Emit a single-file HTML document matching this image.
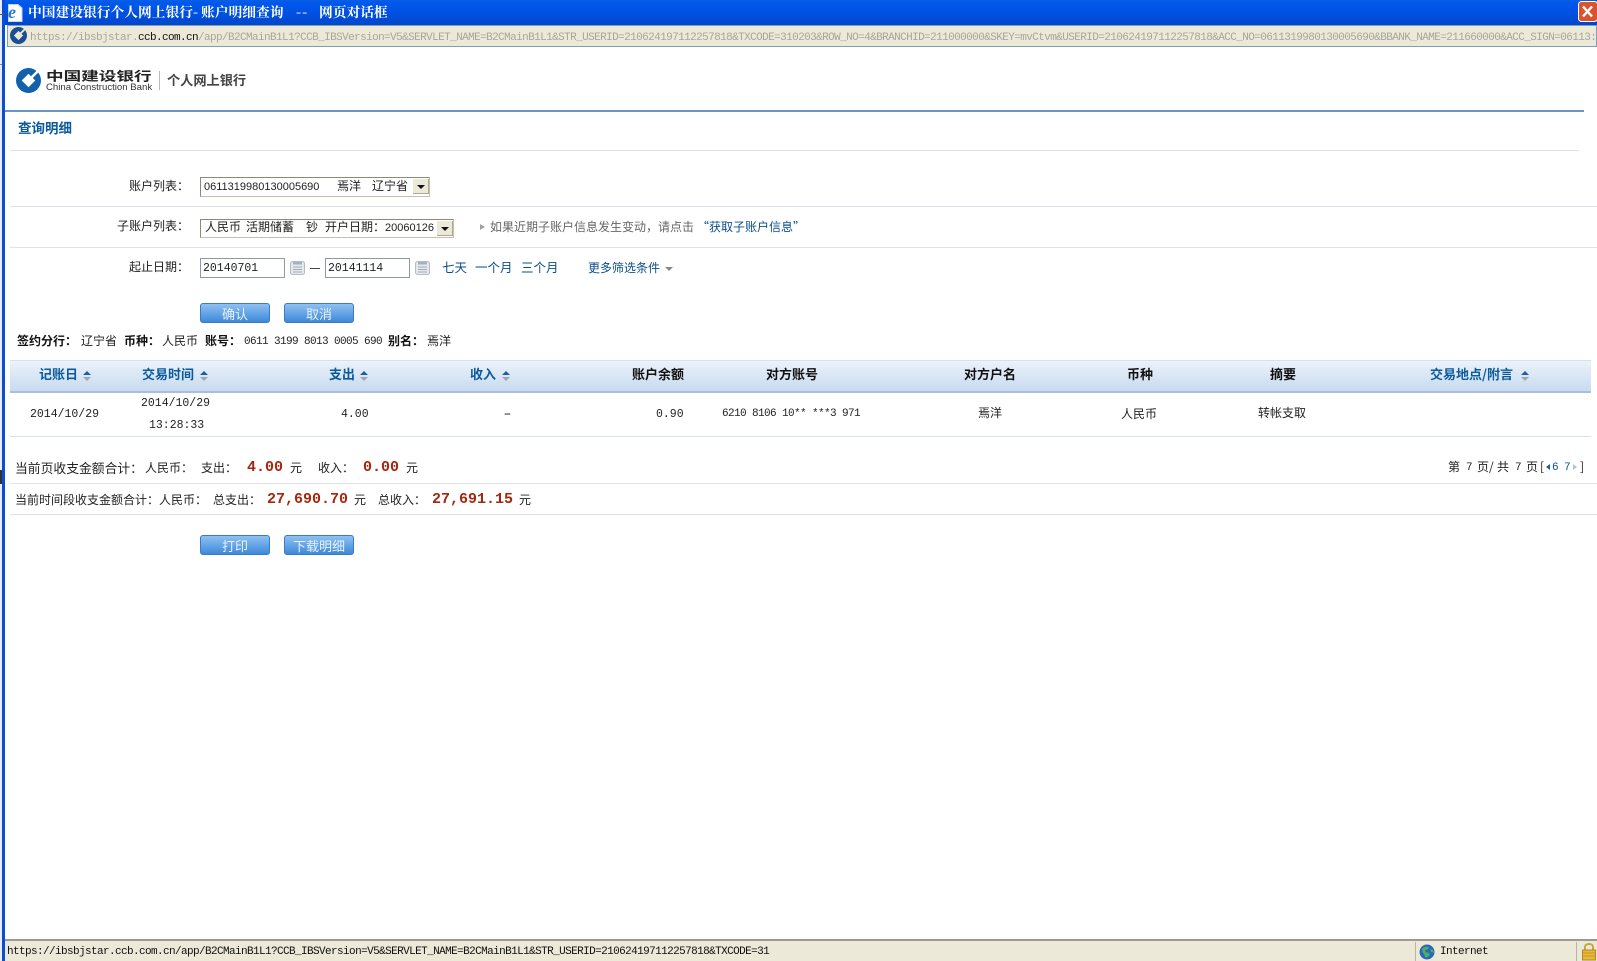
<!DOCTYPE html>
<html><head><meta charset="utf-8"><style>
html,body{margin:0;padding:0;background:#fff}
#p{position:relative;width:1597px;height:961px;overflow:hidden;background:#fff;font-family:"WenQuanYi Zen Hei","Noto Sans CJK SC",sans-serif;font-size:12px;color:#222}
.t{position:absolute;white-space:nowrap;line-height:16px;height:16px}
.b{position:absolute}
.m{font-family:"Liberation Mono",monospace;font-size:11.5px}
.s{font-family:"Liberation Mono",monospace;font-size:11px;letter-spacing:-.6px}
.h{font-weight:bold;font-size:13px;color:#111}
.l{color:#0a5a9c;font-weight:bold;font-size:13px}
.a{color:#0b4f8a}
.r{font-family:"Liberation Mono",monospace;font-weight:bold;font-size:15px;color:#a3270f}
.line{position:absolute;height:1px;background:#dde3e8}
.btn{position:absolute;width:70px;height:20px;box-sizing:border-box;border:1px solid #3a7cc4;border-radius:3px;background:linear-gradient(#8fc0f0,#6aa8e8 45%,#3f88da);color:#e8f2fc;text-align:center;line-height:19px;font-size:13px}
.sel{position:absolute;box-sizing:border-box;border:1px solid #c4c0ac;border-top:1px solid #8a8a78;border-left:1px solid #8a8a78;background:#fff}
.ar{position:absolute;width:16px;height:15px;background:#ece9d8;box-shadow:inset -1px -1px 0 #aca899}
.ar:after{content:"";position:absolute;left:4px;top:6px;border:4px solid transparent;border-top:4px solid #111;border-bottom:0}
.inp{position:absolute;box-sizing:border-box;border:1px solid #8c9aa6;background:#fff;height:20px;width:85px;padding-left:2px;line-height:20px;font-family:"Liberation Mono",monospace;font-size:11.5px;color:#222}
.tt{position:absolute;top:1px;height:20px;line-height:20px;white-space:nowrap;color:#fff;font-weight:bold;font-size:13.75px;font-family:'Noto Serif CJK SC',serif}
</style></head><body><div id="p">

<!-- window frame -->
<div class="b" style="left:5px;top:0;width:1592px;height:25px;background:linear-gradient(#0a5fe0,#0058ee 10%,#0050e0 60%,#0046c8)"></div>
<div class="b" style="left:2px;top:0;width:3px;height:961px;background:#0a4ed6"></div>
<div class="b" style="left:0;top:0;width:2px;height:961px;background:#e8edf5"></div>
<div class="b" style="left:0;top:14px;width:5px;height:1px;background:#555"></div>
<div class="b" style="left:0;top:64px;width:2px;height:1px;background:#888"></div>
<div class="b" style="left:0;top:470px;width:2px;height:14px;background:#333"></div>

<!-- title icon -->
<svg class="b" style="left:7px;top:3px" width="16" height="20" viewBox="0 0 16 20"><path d="M1.500 1.500H11L15 5V18.500H1.500Z" fill="#fff" stroke="#c8d4e8"/><text x="1" y="15" font-family="Liberation Serif" font-style="italic" font-weight="bold" font-size="18" fill="#2a7ac8">e</text></svg>
<div class="tt" style="left:28px">中国建设银行个人网上银行</div>
<div class="tt" style="left:193px">-</div>
<div class="tt" style="left:201px">账户明细查询</div>
<div class="tt" style="left:296px;letter-spacing:1px">--</div>
<div class="tt" style="left:319px">网页对话框</div>

<!-- close -->
<svg class="b" style="left:1578px;top:1px" width="19" height="21" viewBox="0 0 19 21"><rect x=".5" y=".5" width="19" height="20" rx="3" fill="#d9532f" stroke="#fff"/><path d="M5 5.500L14 15.500M14 5.500L5 15.500" stroke="#fff" stroke-width="2.400"/></svg>

<!-- address bar -->
<div class="b" style="left:7px;top:25px;width:1590px;height:22px;box-sizing:border-box;background:#ece9d8;border:1px solid #7f9db9;overflow:hidden">
<div class="t s" style="left:22px;top:4px;color:#a6a69c;letter-spacing:-.6px">https://ibsbjstar.<span style="color:#111">ccb.com.cn</span>/app/B2CMainB1L1?CCB_IBSVersion=V5&amp;SERVLET_NAME=B2CMainB1L1&amp;STR_USERID=210624197112257818&amp;TXCODE=310203&amp;ROW_NO=4&amp;BRANCHID=211000000&amp;SKEY=mvCtvm&amp;USERID=210624197112257818&amp;ACC_NO=0611319980130005690&amp;BBANK_NAME=211660000&amp;ACC_SIGN=06113:</div>
</div>
<svg class="b" style="left:10px;top:27px" width="17" height="17" viewBox="0 0 24 24"><circle cx="12" cy="12" r="12" fill="#1a4f95"/><path d="M12 5.500L18.500 12 12 18.500 5.500 12Z" fill="#ece9d8"/><path d="M12 12L22 2" stroke="#ece9d8" stroke-width="2.600"/></svg>

<!-- logo -->
<svg class="b" style="left:16px;top:68px" width="25" height="25" viewBox="0 0 24 24"><circle cx="12" cy="12" r="12" fill="#1261ae"/><path d="M12 5.500L18.500 12 12 18.500 5.500 12Z" fill="#fff"/><path d="M12 12L22 2" stroke="#fff" stroke-width="2.400"/></svg>
<div class="t" style="left:46px;top:67px;height:18px;line-height:18px;font-size:17.6px;font-weight:bold;color:#222;font-family:'Noto Sans CJK SC',sans-serif;transform:scaleY(.72);transform-origin:0 50%">中国建设银行</div>
<div class="t" style="left:46px;top:80px;font-family:'Liberation Sans',sans-serif;font-size:9.600px;color:#333">China Construction Bank</div>
<div class="b" style="left:159px;top:71px;width:1px;height:19px;background:#bbb"></div>
<div class="t" style="left:167px;top:71px;height:18px;line-height:18px;font-size:13.2px;color:#444;font-weight:bold;font-family:'Noto Sans CJK SC',sans-serif">个人网上银行</div>

<div class="b" style="left:5px;top:110px;width:1579px;height:2px;background:#6b96c4"></div>
<div class="t" style="left:18px;top:119px;font-weight:bold;font-size:13.5px;color:#0a5a9c">查询明细</div>
<div class="line" style="left:10px;top:150px;width:1569px"></div>

<!-- form -->
<div class="t" style="left:129px;top:178px">账户列表：</div>
<div class="sel" style="left:200px;top:177px;width:230px;height:20px">
 <div class="ar" style="right:0;top:1px"></div></div>
<div class="t" style="left:204px;top:179px;font-family:'Liberation Sans',sans-serif;font-size:11px">0611319980130005690</div>
<div class="t" style="left:337px;top:178px">焉洋</div>
<div class="t" style="left:372px;top:178px">辽宁省</div>
<div class="line" style="left:10px;top:206px;width:1587px"></div>

<div class="t" style="left:117px;top:218px">子账户列表：</div>
<div class="sel" style="left:200px;top:219px;width:254px;height:19px">
 <div class="ar" style="right:0;top:1px"></div></div>
<div class="t" style="left:205px;top:219px">人民币</div>
<div class="t" style="left:246px;top:219px">活期储蓄</div>
<div class="t" style="left:306px;top:219px">钞</div>
<div class="t" style="left:325px;top:219px">开户日期：</div>
<div class="t" style="left:385px;top:220px;font-family:'Liberation Sans',sans-serif;font-size:11px">20060126</div>
<div class="b" style="left:480px;top:224px;border:3.500px solid transparent;border-left:5px solid #a0a0a0;border-right:0"></div>
<div class="t" style="left:490px;top:219px;color:#666">如果近期子账户信息发生变动，请点击</div>
<div class="t a" style="left:697px;top:219px">“获取子账户信息”</div>
<div class="line" style="left:10px;top:247px;width:1587px"></div>

<div class="t" style="left:129px;top:259px">起止日期：</div>
<div class="inp" style="left:200px;top:258px">20140701</div>
<svg class="b" style="left:290px;top:260px" width="16" height="16" viewBox="0 0 16 16"><rect x=".5" y="1.500" width="14" height="13" rx="2" fill="#e4e8ec" stroke="#b4bcc4"/><rect x="3" y="2" width="9" height="2.500" fill="#9fb2c4"/><path d="M3 7h9M3 9.500h9M3 12h9" stroke="#a4aeb8"/></svg>
<div class="b" style="left:310px;top:268px;width:10px;height:1px;background:#444"></div>
<div class="inp" style="left:325px;top:258px">20141114</div>
<svg class="b" style="left:415px;top:260px" width="16" height="16" viewBox="0 0 16 16"><rect x=".5" y="1.500" width="14" height="13" rx="2" fill="#e4e8ec" stroke="#b4bcc4"/><rect x="3" y="2" width="9" height="2.500" fill="#9fb2c4"/><path d="M3 7h9M3 9.500h9M3 12h9" stroke="#a4aeb8"/></svg>
<div class="t a" style="left:442px;top:259px;font-size:12.5px">七天</div>
<div class="t a" style="left:475px;top:259px;font-size:12.5px">一个月</div>
<div class="t a" style="left:521px;top:259px;font-size:12.5px">三个月</div>
<div class="t a" style="left:588px;top:260px">更多筛选条件</div>
<div class="b" style="left:665px;top:267px;border:4px solid transparent;border-top:4px solid #888;border-bottom:0"></div>

<div class="btn" style="left:200px;top:303px">确认</div>
<div class="btn" style="left:284px;top:303px">取消</div>

<!-- info line -->
<div class="t" style="left:17px;top:333px;font-weight:bold;color:#111">签约分行：</div>
<div class="t" style="left:81px;top:333px">辽宁省</div>
<div class="t" style="left:124px;top:333px;font-weight:bold;color:#111">币种：</div>
<div class="t" style="left:162px;top:333px">人民币</div>
<div class="t" style="left:205px;top:333px;font-weight:bold;color:#111">账号：</div>
<div class="t s" style="left:244px;top:334px">0611 3199 8013 0005 690</div>
<div class="t" style="left:388px;top:333px;font-weight:bold;color:#111">别名：</div>
<div class="t" style="left:427px;top:333px">焉洋</div>

<!-- table header -->
<div class="b" style="left:10px;top:360px;width:1581px;height:33px;box-sizing:border-box;background:linear-gradient(#ebf2fb,#c8dbef);border-top:1px solid #d5e1f0;border-bottom:2px solid #a9bfdc"></div>
<div class="t l" style="left:39px;top:366px">记账日</div>
<div class="t l" style="left:142px;top:366px">交易时间</div>
<div class="t l" style="left:329px;top:366px">支出</div>
<div class="t l" style="left:470px;top:366px">收入</div>
<div class="t h" style="left:632px;top:366px">账户余额</div>
<div class="t h" style="left:766px;top:366px">对方账号</div>
<div class="t h" style="left:964px;top:366px">对方户名</div>
<div class="t h" style="left:1127px;top:366px">币种</div>
<div class="t h" style="left:1270px;top:366px">摘要</div>
<div class="t l" style="left:1430px;top:366px">交易地点/附言</div>
<svg class="b" style="left:83px;top:370px" width="8" height="12"><path d="M0 5L4 1 8 5Z" fill="#1d5f9e"/><path d="M0 7L4 11 8 7Z" fill="#a0a6ac"/></svg>
<svg class="b" style="left:200px;top:370px" width="8" height="12"><path d="M0 5L4 1 8 5Z" fill="#1d5f9e"/><path d="M0 7L4 11 8 7Z" fill="#a0a6ac"/></svg>
<svg class="b" style="left:360px;top:370px" width="8" height="12"><path d="M0 5L4 1 8 5Z" fill="#1d5f9e"/><path d="M0 7L4 11 8 7Z" fill="#a0a6ac"/></svg>
<svg class="b" style="left:502px;top:370px" width="8" height="12"><path d="M0 5L4 1 8 5Z" fill="#1d5f9e"/><path d="M0 7L4 11 8 7Z" fill="#a0a6ac"/></svg>
<svg class="b" style="left:1521px;top:370px" width="8" height="12"><path d="M0 5L4 1 8 5Z" fill="#1d5f9e"/><path d="M0 7L4 11 8 7Z" fill="#a0a6ac"/></svg>

<!-- row -->
<div class="t m" style="left:30px;top:407px">2014/10/29</div>
<div class="t m" style="left:141px;top:396px">2014/10/29</div>
<div class="t m" style="left:149px;top:418px">13:28:33</div>
<div class="t m" style="left:341px;top:407px">4.00</div>
<div class="t m" style="left:504px;top:407px;transform:scaleX(1.800)">-</div>
<div class="t m" style="left:656px;top:407px">0.90</div>
<div class="t s" style="left:722px;top:406px">6210 8106 10** ***3 971</div>
<div class="t" style="left:978px;top:405px">焉洋</div>
<div class="t" style="left:1121px;top:406px">人民币</div>
<div class="t" style="left:1258px;top:405px">转帐支取</div>
<div class="line" style="left:10px;top:436px;width:1581px;background:#d7e1e8"></div>

<!-- summaries -->
<div class="t" style="left:15px;top:460px;font-size:12.8px">当前页收支金额合计：</div>
<div class="t" style="left:145px;top:460px">人民币：</div>
<div class="t" style="left:201px;top:460px">支出：</div>
<div class="t r" style="left:247px;top:460px">4.00</div>
<div class="t" style="left:290px;top:460px">元</div>
<div class="t" style="left:318px;top:460px">收入：</div>
<div class="t r" style="left:363px;top:460px">0.00</div>
<div class="t" style="left:406px;top:460px">元</div>
<div class="t" style="left:1448px;top:459px">第</div>
<div class="t s" style="left:1466px;top:460px">7</div>
<div class="t" style="left:1477px;top:459px">页</div>
<div class="t" style="left:1489px;top:459px">/</div>
<div class="t" style="left:1497px;top:459px">共</div>
<div class="t s" style="left:1515px;top:460px">7</div>
<div class="t" style="left:1526px;top:459px">页</div>
<div class="t" style="left:1540px;top:459px">[</div>
<div class="b" style="left:1546px;top:464px;border:3px solid transparent;border-right:4px solid #1d5f9e;border-left:0"></div>
<div class="t s a" style="left:1552px;top:460px">6</div>
<div class="t s a" style="left:1564px;top:460px">7</div>
<div class="b" style="left:1573px;top:464px;border:3px solid transparent;border-left:4px solid #b8c0c8;border-right:0"></div>
<div class="t" style="left:1580px;top:459px">]</div>
<div class="line" style="left:10px;top:483px;width:1587px"></div>

<div class="t" style="left:15px;top:492px">当前时间段收支金额合计：人民币：</div>
<div class="t" style="left:213px;top:492px">总支出：</div>
<div class="t r" style="left:267px;top:492px">27,690.70</div>
<div class="t" style="left:354px;top:492px">元</div>
<div class="t" style="left:378px;top:492px">总收入：</div>
<div class="t r" style="left:432px;top:492px">27,691.15</div>
<div class="t" style="left:519px;top:492px">元</div>
<div class="line" style="left:10px;top:514px;width:1587px"></div>

<div class="btn" style="left:200px;top:535px">打印</div>
<div class="btn" style="left:284px;top:535px">下载明细</div>

<!-- status bar -->
<div class="b" style="left:5px;top:939px;width:1592px;height:22px;box-sizing:border-box;background:#ece9d8;border-top:2px solid #9c9a8c"></div>
<div class="t s" style="left:7px;top:944px;color:#111">https://ibsbjstar.ccb.com.cn/app/B2CMainB1L1?CCB_IBSVersion=V5&amp;SERVLET_NAME=B2CMainB1L1&amp;STR_USERID=210624197112257818&amp;TXCODE=31</div>
<div class="b" style="left:1415px;top:942px;width:1px;height:19px;background:#b8b5a4"></div>
<div class="b" style="left:1576px;top:942px;width:1px;height:19px;background:#b8b5a4"></div>
<svg class="b" style="left:1419px;top:944px" width="16" height="16" viewBox="0 0 16 16"><circle cx="8" cy="8" r="7.500" fill="#2a68c0"/><path d="M3 5C5 2 9 2 10 4 9 6 7 5 6 7 7 9 9 8 11 10 10 13 7 14 6 13 6 10 3 9 3 5Z" fill="#4fae5a"/><path d="M11 5L14 6 15 9 12 8Z" fill="#4fae5a"/></svg>
<div class="t s" style="left:1440px;top:944px;color:#111">Internet</div>
<svg class="b" style="left:1581px;top:942px" width="16" height="19" viewBox="0 0 16 19"><path d="M4 8V5C4 1 12 1 12 5V8" fill="none" stroke="#c9a840" stroke-width="2"/><rect x="1.500" y="8" width="13" height="10" fill="#e8b838" stroke="#b08a20"/><path d="M2 11h12M2 14h12" stroke="#c99a28"/></svg>
</div></body></html>
